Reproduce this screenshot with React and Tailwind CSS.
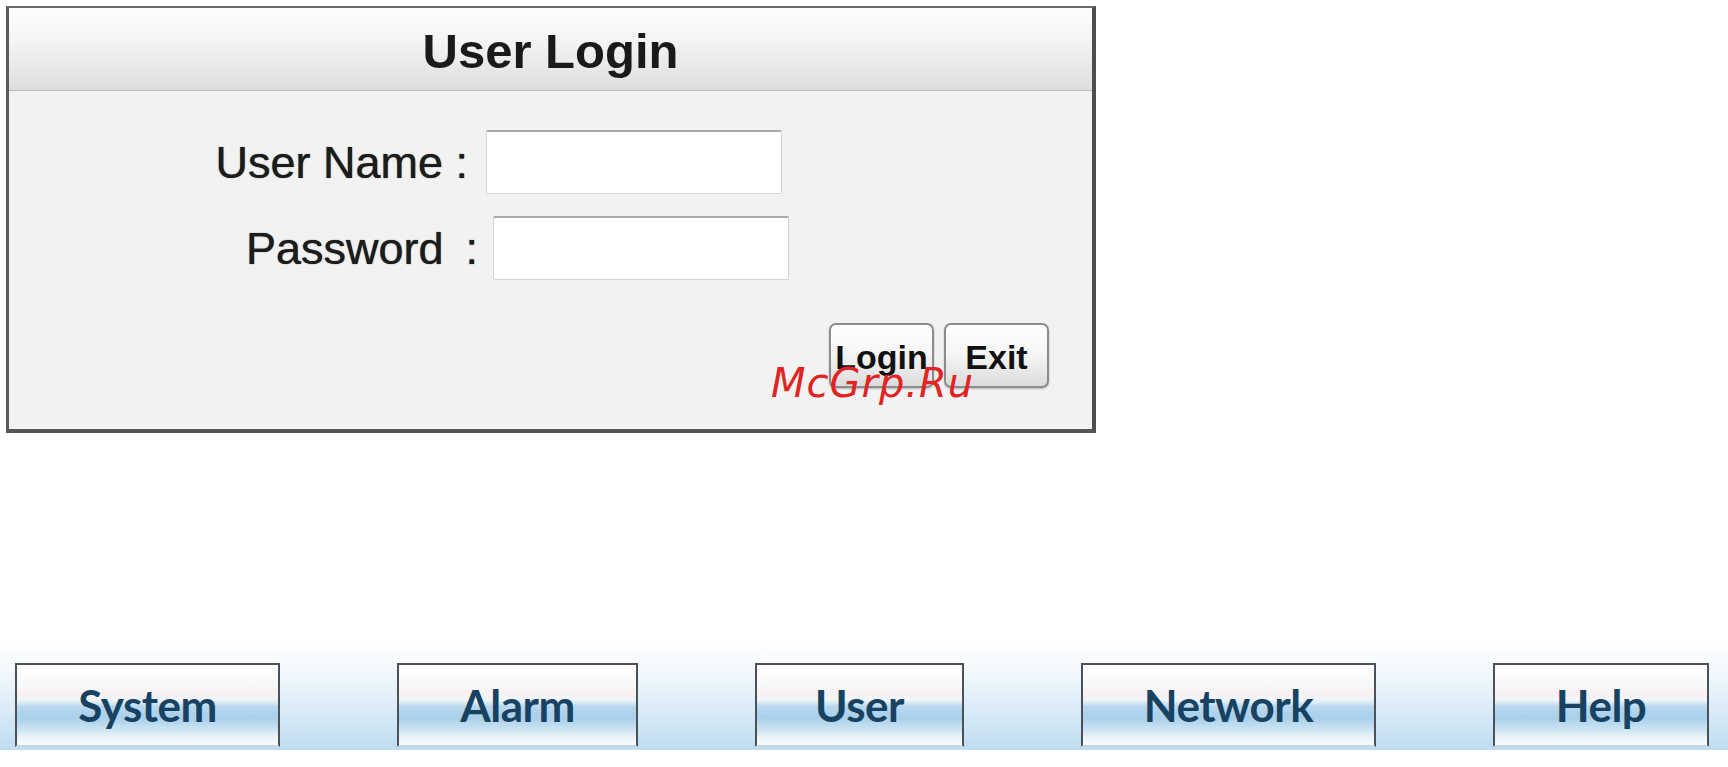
import React from "react";

function NavButton({ label, w }) {
  return (
    <div
      className={`${w} h-[84px] flex items-center justify-center border-t-2 border-l-2 border-r-2 border-b-2 border-t-[#4a5258] border-l-[#4a5258] border-r-[#4a5258] border-b-[#c9d6da] bg-[linear-gradient(to_bottom,#ffffff_0%,#f6f7f8_28%,#fbf0f0_34%,#eef5fa_44%,#b8d8ee_52%,#a9cfea_66%,#cbe3f3_80%,#eef6fa_92%,#f6fafc_100%)]`}
    >
      <span className="font-['Lato',sans-serif] font-bold text-[44px] leading-none text-[#184262] tracking-[-0.5px]">
        {label}
      </span>
    </div>
  );
}

export default function App() {
  return (
    <div className="relative w-[1728px] h-[767px] bg-white overflow-hidden font-['Liberation_Sans',Arial,sans-serif]">
      <div className="pt-[6px] pl-[6px]">
        <div className="w-[1090px] h-[427px] flex flex-col border-t-2 border-l-[3px] border-r-4 border-b-4 border-t-[#6a6a6a] border-l-[#5a5a5a] border-r-[#4e4e4e] border-b-[#555555] bg-[#f2f2f2]">
          <div className="h-[83px] shrink-0 flex items-center justify-center bg-[linear-gradient(to_bottom,#fdfdfd_0%,#f4f4f4_40%,#dedede_100%)] border-b border-[#bdbdbd]">
            <span className="text-[49px] font-bold leading-none text-[#1a1a1a] mt-[4px]">
              User Login
            </span>
          </div>
          <div className="flex flex-col">
            <div className="flex items-center mt-[39px]">
              <div className="w-[459px] flex justify-end text-[45px] leading-none text-[#1c1c1c] [text-shadow:0_0_1px_#222]">
                <span>User Name :</span>
              </div>
              <div className="ml-[18px] w-[296px] h-[64px] bg-white border border-[#d4d4d4] border-t-2 border-t-[#a9a9a9] rounded-[2px]" />
            </div>
            <div className="flex items-center mt-[22px]">
              <div className="w-[469px] flex justify-end text-[45px] leading-none text-[#1c1c1c] [text-shadow:0_0_1px_#222]">
                <span>Password</span>
                <span className="ml-[22px]">:</span>
              </div>
              <div className="ml-[15px] w-[296px] h-[64px] bg-white border border-[#d4d4d4] border-t-2 border-t-[#a9a9a9] rounded-[2px]" />
            </div>
            <div className="flex justify-end gap-[10px] mt-[43px] pr-[43px]">
              <div className="w-[105px] h-[65px] flex items-center justify-center rounded-[7px] border-2 border-[#8c8c8c] bg-[linear-gradient(to_bottom,#ffffff_0%,#f6f6f6_45%,#dcdcdc_100%)] shadow-[0_1px_2px_rgba(0,0,0,0.25)]">
                <span className="text-[34px] font-bold leading-none text-[#111111] mt-[2px]">Login</span>
              </div>
              <div className="w-[105px] h-[65px] flex items-center justify-center rounded-[7px] border-2 border-[#8c8c8c] bg-[linear-gradient(to_bottom,#ffffff_0%,#f6f6f6_45%,#dcdcdc_100%)] shadow-[0_1px_2px_rgba(0,0,0,0.25)]">
                <span className="text-[34px] font-bold leading-none text-[#111111] mt-[2px]">Exit</span>
              </div>
            </div>
          </div>
        </div>
      </div>

      <div className="mt-[207px] h-[110px] pt-[23px] pl-[15px] flex gap-[117px] bg-[linear-gradient(to_bottom,#ffffff_0%,#f5fafd_25%,#dcedf8_60%,#bfdcf1_100%)]">
        <NavButton label="System" w="w-[265px]" />
        <NavButton label="Alarm" w="w-[241px]" />
        <NavButton label="User" w="w-[209px]" />
        <NavButton label="Network" w="w-[295px]" />
        <NavButton label="Help" w="w-[216px]" />
      </div>

      <div className="absolute left-[771px] top-[363px] font-['DejaVu_Sans',sans-serif] italic text-[40px] leading-none text-[#e02424] tracking-[1px] pointer-events-none">
        McGrp.Ru
      </div>
    </div>
  );
}
